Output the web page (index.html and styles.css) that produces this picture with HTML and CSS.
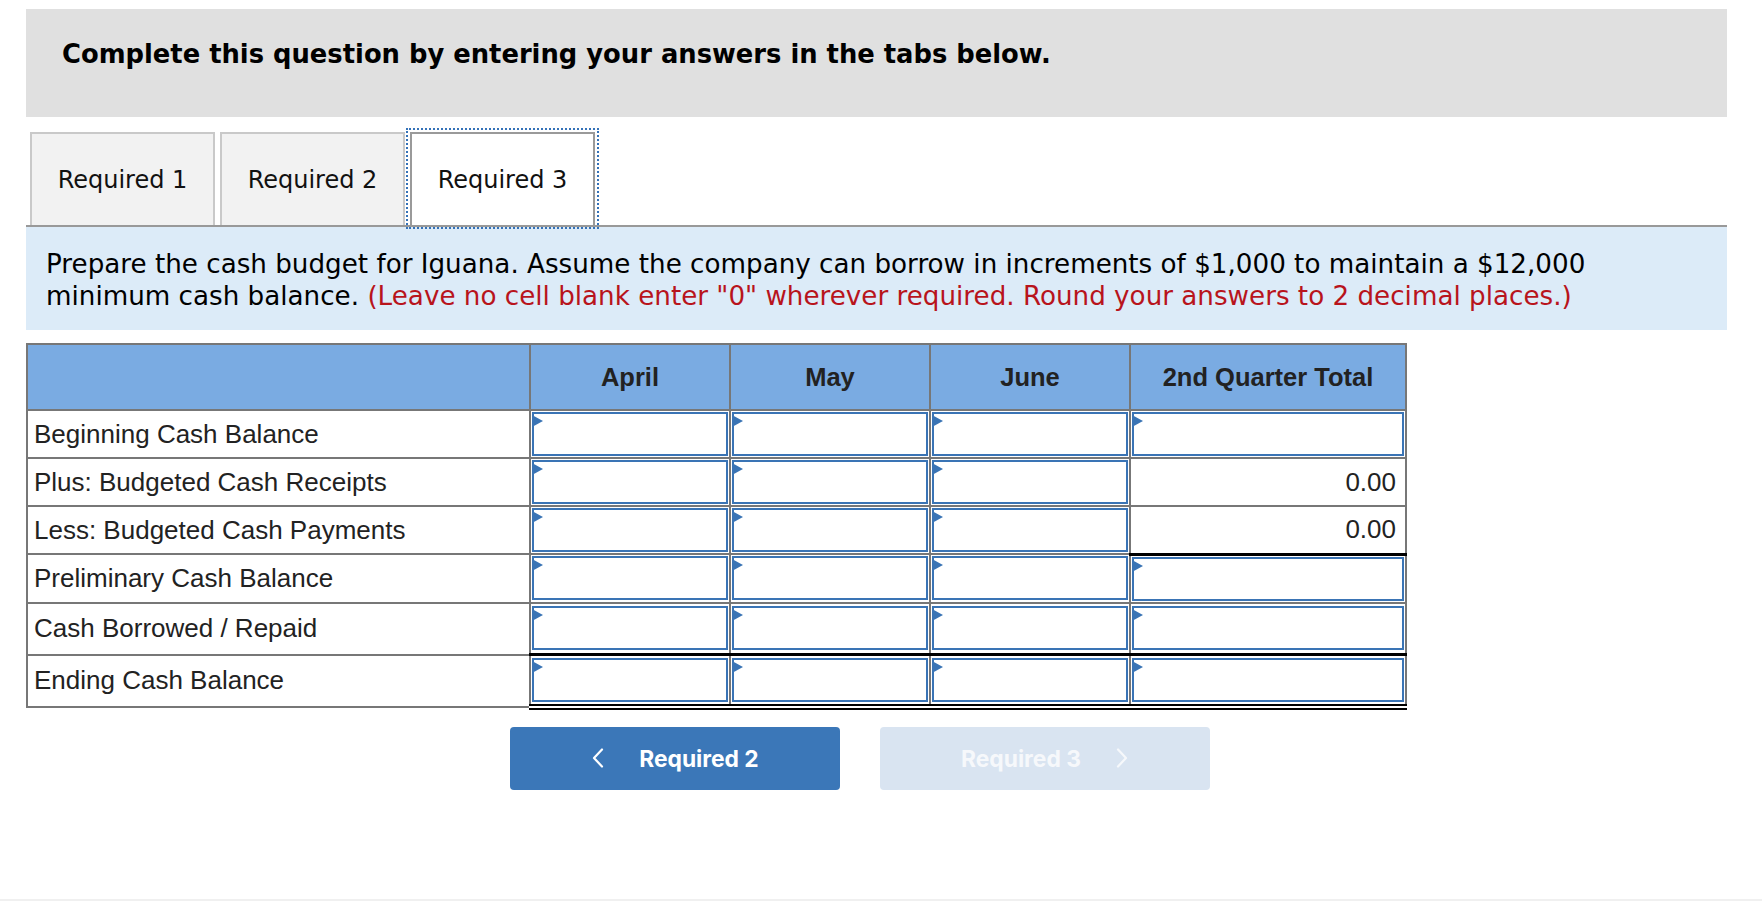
FILE: index.html
```html
<!DOCTYPE html>
<html lang="en">
<head>
<meta charset="utf-8">
<title>Cash budget</title>
<link rel="stylesheet" href="styles.css">
</head>
<body>
<div class="page">
  <main class="main">
    <div class="banner">
      <h1 class="banner-title">Complete this question by entering your answers in the tabs below.</h1>
    </div>

    <div class="tabs">
      <button class="tab">Required 1</button>
      <button class="tab">Required 2</button>
      <button class="tab tab-active">Required 3</button>
    </div>

    <div class="prompt">
      <p class="prompt-text">Prepare the cash budget for Iguana. Assume the company can borrow in increments of $1,000 to maintain a $12,000 minimum cash balance. <span class="warn">(Leave no cell blank enter "0" wherever required. Round your answers to 2 decimal places.)</span></p>
    </div>

    <table class="budget">
      <colgroup>
        <col class="c-label">
        <col class="c-month">
        <col class="c-month">
        <col class="c-month">
        <col class="c-total">
      </colgroup>
      <thead>
        <tr>
          <th></th>
          <th>April</th>
          <th>May</th>
          <th>June</th>
          <th>2nd Quarter Total</th>
        </tr>
      </thead>
      <tbody>
        <tr>
          <td class="lbl">Beginning Cash Balance</td>
          <td class="in"><div class="box"></div></td>
          <td class="in"><div class="box"></div></td>
          <td class="in"><div class="box"></div></td>
          <td class="in"><div class="box"></div></td>
        </tr>
        <tr>
          <td class="lbl">Plus: Budgeted Cash Receipts</td>
          <td class="in"><div class="box"></div></td>
          <td class="in"><div class="box"></div></td>
          <td class="in"><div class="box"></div></td>
          <td class="num">0.00</td>
        </tr>
        <tr>
          <td class="lbl">Less: Budgeted Cash Payments</td>
          <td class="in"><div class="box"></div></td>
          <td class="in"><div class="box"></div></td>
          <td class="in"><div class="box"></div></td>
          <td class="num sum-line">0.00</td>
        </tr>
        <tr>
          <td class="lbl">Preliminary Cash Balance</td>
          <td class="in"><div class="box"></div></td>
          <td class="in"><div class="box"></div></td>
          <td class="in"><div class="box"></div></td>
          <td class="in"><div class="box"></div></td>
        </tr>
        <tr class="row-single">
          <td class="lbl">Cash Borrowed / Repaid</td>
          <td class="in"><div class="box"></div></td>
          <td class="in"><div class="box"></div></td>
          <td class="in"><div class="box"></div></td>
          <td class="in"><div class="box"></div></td>
        </tr>
        <tr class="row-double">
          <td class="lbl">Ending Cash Balance</td>
          <td class="in"><div class="box"></div></td>
          <td class="in"><div class="box"></div></td>
          <td class="in"><div class="box"></div></td>
          <td class="in"><div class="box"></div></td>
        </tr>
      </tbody>
    </table>

    <div class="pager">
      <button class="pbtn pbtn-prev">
        <svg class="chev" width="14" height="20" viewBox="0 0 14 20" aria-hidden="true"><polyline points="11,1.5 3,10 11,18.5" fill="none" stroke="currentColor" stroke-width="2.2" stroke-linecap="round" stroke-linejoin="round"/></svg>
        <span>Required 2</span>
      </button>
      <button class="pbtn pbtn-next" disabled>
        <span>Required 3</span>
        <svg class="chev" width="14" height="20" viewBox="0 0 14 20" aria-hidden="true"><polyline points="3,1.5 11,10 3,18.5" fill="none" stroke="currentColor" stroke-width="2.2" stroke-linecap="round" stroke-linejoin="round"/></svg>
      </button>
    </div>
  </main>
  <div class="page-rule"></div>
</div>
</body>
</html>
```

FILE: styles.css
```css
* { box-sizing: border-box; }

html, body {
  margin: 0;
  padding: 0;
  background: #ffffff;
}

.page {
  min-height: 901px;
  display: flex;
  flex-direction: column;
  padding-top: 9px;
}

.main {
  margin-left: 26px;
  width: 1701px;
}

/* Banner */
.banner {
  height: 108px;
  background: #e0e0e0;
  padding: 30px 0 0 36px;
}

.banner-title {
  margin: 0;
  font-family: "DejaVu Sans", Verdana, sans-serif;
  font-weight: bold;
  font-size: 25.8px;
  line-height: 30px;
  color: #000;
}

/* Tabs */
.tabs {
  margin-top: 15px;
  display: flex;
  gap: 5px;
  padding-left: 4px;
  border-bottom: 2px solid #999999;
  height: 95px;
}

.tab {
  width: 185px;
  height: 93px;
  background: #f2f2f2;
  border: 2px solid #c9c9c9;
  border-bottom: none;
  font-family: "DejaVu Sans", Verdana, sans-serif;
  font-size: 24px;
  color: #111;
  padding: 0;
  margin: 0;
  cursor: pointer;
}

.tab-active {
  background: #ffffff;
  border-color: #9a9a9a;
  outline: 2px dotted #3572b8;
  outline-offset: 2px;
}

/* Prompt */
.prompt {
  background: #dcebf8;
  height: 103px;
  padding: 21px 0 0 20px;
}

.prompt-text {
  margin: 0;
  max-width: 1620px;
  font-family: "DejaVu Sans", Verdana, sans-serif;
  font-size: 26.2px;
  line-height: 32px;
  color: #000;
}

.warn {
  color: #b8141c;
}

/* Table */
.budget {
  margin-top: 13px;
  border-collapse: collapse;
  table-layout: fixed;
  width: 1379px;
  font-family: "Liberation Sans", Arial, sans-serif;
  color: #222;
}

.c-label { width: 503px; }
.c-month { width: 200px; }
.c-total { width: 276px; }

.budget th {
  background: #7aabe2;
  border: 2px solid #777777;
  height: 66px;
  font-size: 25.5px;
  font-weight: bold;
  text-align: center;
  padding: 0;
  color: #222;
}

.budget td {
  border: 2px solid #777777;
  height: 48px;
  padding: 1px;
  font-size: 26px;
}

.budget td.lbl {
  padding: 0 6px;
  text-align: left;
}

.budget td.num {
  text-align: right;
  padding: 0 9px 0 0;
}

.box {
  position: relative;
  height: 44px;
  border: 2px solid #3a74b5;
  background: #fff;
}

.box::before {
  content: "";
  position: absolute;
  top: 1px;
  left: -2px;
  border-left: 11px solid #3a74b5;
  border-top: 6.5px solid transparent;
  border-bottom: 6.5px solid transparent;
}

.budget td.sum-line {
  border-bottom: 3px solid #000;
}

.row-single td.in {
  border-bottom: 3px solid #000;
  height: 52px;
}

.row-single td.lbl { height: 52px; }

.row-double td.in {
  border-bottom: 6px double #000;
  height: 52px;
}

.row-double td.lbl { height: 52px; }

/* Pager */
.pager {
  margin-top: 17px;
  margin-left: 484px;
  display: flex;
  gap: 40px;
}

.pbtn {
  width: 330px;
  height: 63px;
  border: none;
  border-radius: 4px;
  display: flex;
  align-items: center;
  justify-content: center;
  gap: 34px;
  font-family: Inter, Roboto, sans-serif;
  font-weight: 700;
  font-size: 22.8px;
  padding: 0;
}

.pbtn-prev {
  background: #3b77b8;
  color: #ffffff;
  cursor: pointer;
}

.pbtn-next {
  background: #d9e4f1;
  color: #f6f8fb;
}

.chev { display: block; }

.page-rule {
  margin-top: auto;
  height: 2px;
  background: #f0f0f0;
}
```
